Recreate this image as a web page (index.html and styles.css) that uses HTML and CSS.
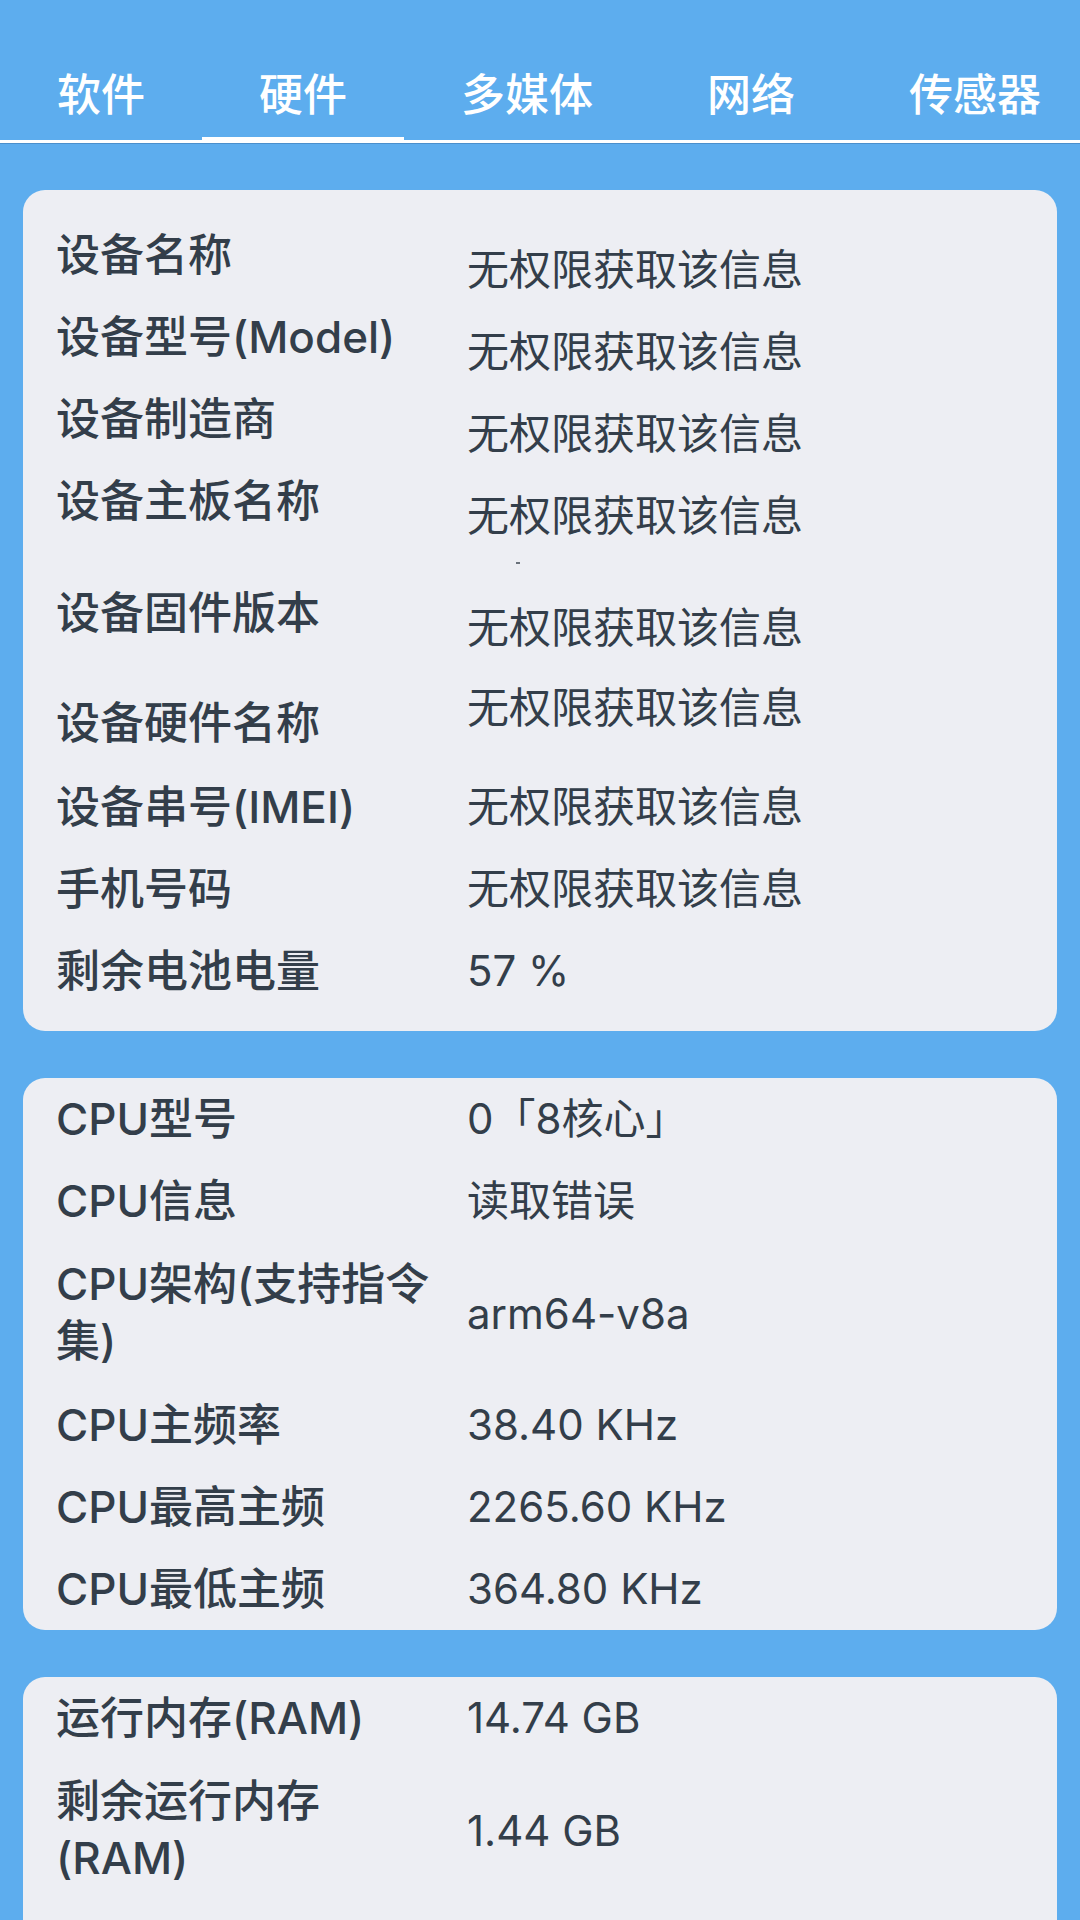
FILE: index.html
```html
<!DOCTYPE html>
<html lang="zh-CN">
<head>
<meta charset="utf-8">
<title>硬件</title>
<link rel="stylesheet" href="styles.css">
</head>
<body>
<nav class="tabs">
  <div class="tab">软件</div>
  <div class="tab active">硬件</div>
  <div class="tab">多媒体</div>
  <div class="tab">网络</div>
  <div class="tab">传感器</div>
</nav>
<main class="content">
  <section class="card card-device">
    <div class="row"><div class="label">设备名称</div><div class="value drop">无权限获取该信息</div></div>
    <div class="row"><div class="label">设备型号(Model)</div><div class="value drop">无权限获取该信息</div></div>
    <div class="row"><div class="label">设备制造商</div><div class="value drop">无权限获取该信息</div></div>
    <div class="row gap-lg"><div class="label">设备主板名称</div><div class="value drop">无权限获取该信息</div></div>
    <div class="row gap-sm"><div class="label">设备固件版本</div><div class="value drop">无权限获取该信息</div></div>
    <div class="row gap-md"><div class="label drop">设备硬件名称</div><div class="value">无权限获取该信息</div></div>
    <div class="row"><div class="label">设备串号(IMEI)</div><div class="value">无权限获取该信息</div></div>
    <div class="row"><div class="label">手机号码</div><div class="value">无权限获取该信息</div></div>
    <div class="row"><div class="label">剩余电池电量</div><div class="value">57 %</div></div>
    <span class="speck"></span>
  </section>
  <section class="card card-tight">
    <div class="row"><div class="label">CPU型号</div><div class="value">0「8核心」</div></div>
    <div class="row"><div class="label">CPU信息</div><div class="value">读取错误</div></div>
    <div class="row multi"><div class="label">CPU架构(支持指令集)</div><div class="value">arm64-v8a</div></div>
    <div class="row"><div class="label">CPU主频率</div><div class="value">38.40 KHz</div></div>
    <div class="row"><div class="label">CPU最高主频</div><div class="value">2265.60 KHz</div></div>
    <div class="row"><div class="label">CPU最低主频</div><div class="value">364.80 KHz</div></div>
  </section>
  <section class="card card-tight card-last">
    <div class="row"><div class="label">运行内存(RAM)</div><div class="value">14.74 GB</div></div>
    <div class="row multi"><div class="label">剩余运行内存(RAM)</div><div class="value">1.44 GB</div></div>
  </section>
</main>
</body>
</html>
```

FILE: styles.css
```css
html, body {
  margin: 0;
  padding: 0;
  height: 1920px;
  overflow: hidden;
}

body {
  background: #5dadee;
  font-family: "Inter", "Noto Sans CJK SC", sans-serif;
  color: #333e4a;
}

.tabs {
  display: flex;
  height: 140px;
  border-bottom: 3px solid #ffffff;
  box-shadow: 0 1px 0 rgba(40, 90, 140, 0.35);
  white-space: nowrap;
  overflow: hidden;
}

.tab {
  position: relative;
  flex: none;
  display: flex;
  align-items: flex-end;
  padding: 0 57px 25px;
  font-size: 44px;
  line-height: 40px;
  font-weight: 500;
  color: #ffffff;
}

.tab.active::after {
  content: "";
  position: absolute;
  left: 0;
  right: 0;
  bottom: 0;
  height: 3px;
  background: #ffffff;
}

.content {
  display: flex;
  flex-direction: column;
  gap: 47px;
  padding: 47px 23px 0;
}

.card {
  position: relative;
  background: #edeef3;
  border-radius: 22px;
  padding: 24px 0 19px;
}

.card-tight {
  padding: 0;
}

.card-last {
  padding-bottom: 80px;
}

.row {
  display: flex;
  height: 82px;
  padding: 0 33px;
}

.label {
  flex: none;
  width: 382px;
  margin-right: 29px;
  font-size: 44px;
  line-height: 82px;
  font-weight: 500;
}

.value {
  font-size: 42px;
  line-height: 82px;
  font-weight: 400;
}

.drop {
  padding-top: 15px;
}

.gap-lg {
  margin-bottom: 30px;
}

.gap-sm {
  margin-bottom: 13px;
}

.gap-md {
  margin-bottom: 17px;
}

.row.multi {
  height: auto;
  padding-top: 14px;
  padding-bottom: 14px;
  align-items: center;
}

.row.multi .label,
.row.multi .value {
  line-height: 57px;
}

.speck {
  position: absolute;
  left: 493px;
  top: 372px;
  width: 4px;
  height: 2px;
  background: #6a717a;
}
```
